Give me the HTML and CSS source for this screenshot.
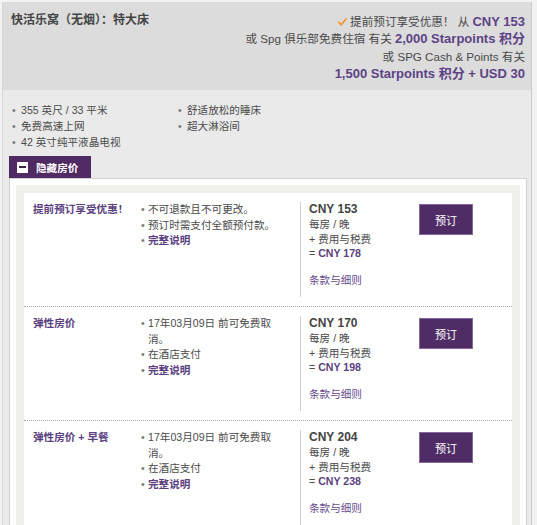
FILE: index.html
```html
<!DOCTYPE html>
<html lang="zh-CN">
<head>
<meta charset="utf-8">
<title>快活乐窝（无烟）：特大床</title>
<link rel="stylesheet" href="styles.css">
</head>
<body>
<div class="room">
  <div class="head">
    <div class="title">快活乐窝（无烟）：特大床</div>
    <div class="offers">
      <div><svg class="check" width="9" height="8" viewBox="0 0 9 8"><path d="M1 4.3 L3.4 6.8 L8 1" fill="none" stroke="#f29a2e" stroke-width="1.8" stroke-linecap="round" stroke-linejoin="round"/></svg> 提前预订享受优惠！ 从 <b>CNY 153</b></div>
      <div>或 Spg 俱乐部免费住宿 有关 <b>2,000 Starpoints 积分</b></div>
      <div>或 SPG Cash &amp; Points 有关</div>
      <div><b>1,500 Starpoints 积分 + USD 30</b></div>
    </div>
  </div>
  <div class="amen">
    <ul class="list">
      <li>355 英尺 / 33 平米</li>
      <li>免费高速上网</li>
      <li>42 英寸纯平液晶电视</li>
    </ul>
    <ul class="list">
      <li>舒适放松的睡床</li>
      <li>超大淋浴间</li>
    </ul>
  </div>
  <div class="tab"><span class="minus"></span>隐藏房价</div>
  <div class="panel">
    <div class="box">
      <div class="row">
        <div class="name">提前预订享受优惠！</div>
        <ul class="desc">
          <li>不可退款且不可更改。</li>
          <li>预订时需支付全额预付款。</li>
          <li><a class="link">完整说明</a></li>
        </ul>
        <div class="price">
          <div class="amt">CNY 153</div>
          <div>每房 / 晚</div>
          <div>+ 费用与税费</div>
          <div>= <b class="pur">CNY 178</b></div>
          <div class="terms">条款与细则</div>
        </div>
        <div class="btn">预订</div>
      </div>
      <div class="row">
        <div class="name">弹性房价</div>
        <ul class="desc">
          <li>17年03月09日 前可免费取消。</li>
          <li>在酒店支付</li>
          <li><a class="link">完整说明</a></li>
        </ul>
        <div class="price">
          <div class="amt">CNY 170</div>
          <div>每房 / 晚</div>
          <div>+ 费用与税费</div>
          <div>= <b class="pur">CNY 198</b></div>
          <div class="terms">条款与细则</div>
        </div>
        <div class="btn">预订</div>
      </div>
      <div class="row">
        <div class="name">弹性房价 + 早餐</div>
        <ul class="desc">
          <li>17年03月09日 前可免费取消。</li>
          <li>在酒店支付</li>
          <li><a class="link">完整说明</a></li>
        </ul>
        <div class="price">
          <div class="amt">CNY 204</div>
          <div>每房 / 晚</div>
          <div>+ 费用与税费</div>
          <div>= <b class="pur">CNY 238</b></div>
          <div class="terms">条款与细则</div>
        </div>
        <div class="btn">预订</div>
      </div>
    </div>
  </div>
</div>
</body>
</html>
```
FILE: styles.css
```css
html, body {
  margin: 0;
  padding: 0;
}
body {
  background: #f2f2f2;
  font-family: "Liberation Sans", "Noto Sans CJK SC", sans-serif;
  font-size: 10.6px;
  color: #4a4a4a;
  height: 525px;
  overflow: hidden;
}
.room {
  margin: 2px 0 0 2px;
  width: 528px;
  border-left: 1px solid #d6d6d6;
  border-right: 1px solid #c9c9c9;
  background: #eaeaea;
}
.head {
  background: #dcdcdc;
  display: flex;
  justify-content: space-between;
  padding: 11px 6px 8px 8px;
}
.title {
  font-size: 12px;
  font-weight: bold;
  color: #444;
  line-height: 14px;
}
.offers {
  text-align: right;
  font-size: 11.6px;
  line-height: 17.3px;
  color: #4a4a4a;
}
.offers b {
  font-size: 13px;
  color: #5d4286;
}
.check {
  vertical-align: 0;
}
.amen {
  display: grid;
  grid-template-columns: 166px auto;
  padding: 12px 0 0 9px;
}
.list {
  list-style: none;
  margin: 0;
  padding: 0;
  line-height: 16px;
}
.list li::before,
.desc li::before {
  content: "•";
  display: inline-block;
  color: #777;
}
.list li::before {
  width: 9px;
}
.tab {
  margin: 6px 0 0 6px;
  width: 82px;
  height: 22px;
  box-sizing: border-box;
  background: #4f2a63;
  color: #fff;
  font-weight: bold;
  display: flex;
  align-items: center;
  padding-left: 8px;
  gap: 8px;
}
.minus {
  width: 11px;
  height: 11px;
  background: #fff;
  display: flex;
  align-items: center;
  justify-content: center;
}
.minus::after {
  content: "";
  width: 7px;
  height: 2px;
  background: #3a2846;
}
.panel {
  margin: 0 4px 0 6px;
  border: 1px solid #d0d0d0;
  background: #fff;
  padding: 6px;
}
.box {
  background: #f1f1ec;
  padding: 8px;
}
.row {
  background: #fff;
  display: flex;
  align-items: flex-start;
  padding: 9px 0 9px 9px;
}
.row + .row {
  border-top: 1px dotted #aaa;
}
.name {
  width: 108px;
  flex: none;
  font-weight: bold;
  color: #5b3f80;
  line-height: 15.5px;
}
.desc {
  list-style: none;
  margin: 0;
  padding: 0 22px 0 0;
  width: 159px;
  box-sizing: border-box;
  flex: none;
  line-height: 15.5px;
}
.desc li {
  padding-left: 7px;
  text-indent: -7px;
}
.desc li::before {
  width: 7px;
  text-indent: 0;
}
.link {
  color: #5b3f80;
  font-weight: bold;
}
.price {
  width: 119px;
  flex: none;
  box-sizing: border-box;
  border-left: 1px solid #cfcfcf;
  padding-left: 8px;
  min-height: 95px;
  line-height: 14.5px;
}
.amt {
  font-size: 12px;
  font-weight: bold;
  color: #444;
  line-height: 15px;
}
.pur {
  color: #5b3f80;
}
.terms {
  margin-top: 12px;
  color: #654b8c;
}
.btn {
  margin-top: 2px;
  width: 54px;
  height: 31px;
  box-sizing: border-box;
  background: #4f2c66;
  border: 1px solid #85699a;
  color: #fff;
  font-size: 11px;
  display: flex;
  align-items: center;
  justify-content: center;
}
```
